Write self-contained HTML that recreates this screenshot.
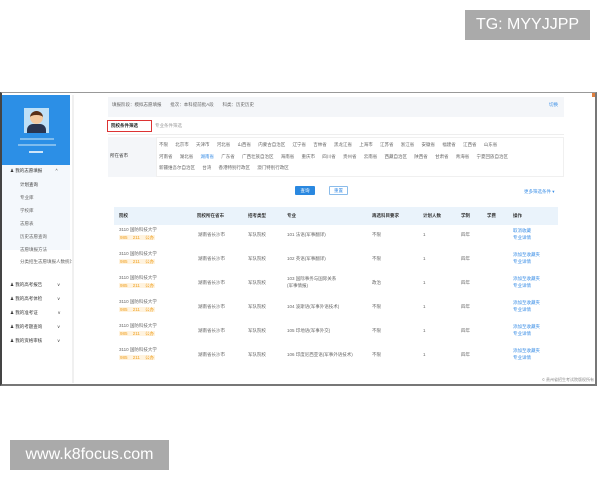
<!DOCTYPE html>
<html><head><meta charset="utf-8"><style>
*{margin:0;padding:0;box-sizing:border-box}
body{width:600px;height:480px;background:#fff;position:relative;overflow:hidden;font-family:"Liberation Sans","Noto Sans CJK SC",sans-serif;font-size:4.5px;color:#666}
.a{position:absolute;white-space:nowrap}
.frame{position:absolute;left:0;top:92px;width:597px;height:294px;border:2px solid #777;border-top:1.5px solid #999;border-left:2px solid #444;background:#fff}
.blue{color:#3a8ee6}
.org{color:#f0a020;background:#fff3df;padding:0 1px;word-spacing:4px}
</style></head><body>
<div class="a" style="left:465px;top:10px;width:125px;height:30px;background:#aaa;color:#fff;font-size:16px;line-height:30px;text-align:center">TG: MYYJJPP</div>
<div class="a" style="left:10px;top:440px;width:159px;height:30px;background:#aaa;color:#fff;font-size:16px;line-height:30px;text-align:center">www.k8focus.com</div>

<div class="frame">
 <div class="a" style="left:0;top:2px;width:68px;height:70px;background:#2c8fe6"></div>
 <div class="a" style="left:22px;top:15px;width:25px;height:25px;background:#bfe0f7"></div>
 <div class="a" style="left:28px;top:18px;width:13px;height:13px;border-radius:50%;background:#f3c9a0;border-top:4px solid #5a3018"></div>
 <div class="a" style="left:25px;top:31px;width:19px;height:9px;background:#2a3550;border-radius:6px 6px 0 0"></div>
 <div class="a" style="left:18px;top:45px;width:34px;height:2px;background:#7fbcee"></div>
 <div class="a" style="left:16px;top:51px;width:38px;height:2px;background:#7fbcee"></div>
 <div class="a" style="left:27px;top:58px;width:14px;height:2px;background:#cfe6f9"></div>
 <div class="a" style="left:0;top:72px;width:68px;height:85px;background:#f4f8fc"></div>
 <div class="a" style="left:8px;top:75px;color:#333">♟ 我的志愿填报 <span style="margin-left:12px">^</span></div>
 <div class="a" style="left:18px;top:89px;color:#333">计划查询</div>
 <div class="a" style="left:18px;top:102px">专业库</div>
 <div class="a" style="left:18px;top:115px">学校库</div>
 <div class="a" style="left:18px;top:128px">志愿表</div>
 <div class="a" style="left:18px;top:141px">历史志愿查询</div>
 <div class="a" style="left:18px;top:154px">志愿填报方法</div>
 <div class="a" style="left:18px;top:166px">分类招生志愿填报人数统计</div>
 <div class="a" style="left:8px;top:189px;color:#333">♟ 我的高考报告 <span style="margin-left:14px">v</span></div>
 <div class="a" style="left:8px;top:203px;color:#333">♟ 我的高考体检 <span style="margin-left:14px">v</span></div>
 <div class="a" style="left:8px;top:217px;color:#333">♟ 我的准考证 <span style="margin-left:19px">v</span></div>
 <div class="a" style="left:8px;top:231px;color:#333">♟ 我的考题查询 <span style="margin-left:14px">v</span></div>
 <div class="a" style="left:8px;top:245px;color:#333">♟ 我的资格审核 <span style="margin-left:14px">v</span></div>
 <div class="a" style="left:70px;top:2px;width:2px;height:288px;background:#f0f0f0"></div>

 <div class="a" style="left:106px;top:4px;width:456px;height:20px;background:#f4f6f9"></div>
 <div class="a" style="left:110px;top:9px">填报阶段：模拟志愿填报 &nbsp;&nbsp;&nbsp;&nbsp;&nbsp; 批次：本科提前批A段 &nbsp;&nbsp;&nbsp;&nbsp;&nbsp; 科类：历史历史</div>
 <div class="a blue" style="left:547px;top:9px">切换</div>
 <div class="a" style="left:105px;top:27px;width:45px;height:12px;border:1.5px solid #d33;color:#222;font-weight:bold;line-height:9px;padding-left:3px">院校条件筛选</div>
 <div class="a" style="left:153px;top:30px;color:#999">专业条件筛选</div>
 <div class="a" style="left:106px;top:41px;width:456px;height:1px;background:#eee"></div>
 <div class="a" style="left:106px;top:44px;width:48px;height:40px;background:#f4f6f9"></div>
 <div class="a" style="left:108px;top:60px;color:#333">所在省市</div>
 <div class="a" style="left:154px;top:44px;width:408px;height:40px;border:1px solid #f0f0f0"></div>
 <div class="a" style="left:157px;top:49px;word-spacing:6px">不限 北京市 天津市 河北省 山西省 内蒙古自治区 辽宁省 吉林省 黑龙江省 上海市 江苏省 浙江省 安徽省 福建省 江西省 山东省</div>
 <div class="a" style="left:157px;top:61px;word-spacing:6px">河南省 湖北省 <span class="blue">湖南省</span> 广东省 广西壮族自治区 海南省 重庆市 四川省 贵州省 云南省 西藏自治区 陕西省 甘肃省 青海省 宁夏回族自治区</div>
 <div class="a" style="left:157px;top:72px;word-spacing:6px">新疆维吾尔自治区 台湾 香港特别行政区 澳门特别行政区</div>

 <div class="a" style="left:293px;top:93px;width:20px;height:9px;background:#2a88e0;color:#fff;text-align:center;line-height:9px;border-radius:1px">查询</div>
 <div class="a blue" style="left:327px;top:93px;width:19px;height:9px;border:1px solid #8bbcea;text-align:center;line-height:7px;border-radius:1px">重置</div>
 <div class="a blue" style="left:522px;top:96px">更多筛选条件 ▾</div>

 <div class="a" style="left:112px;top:114px;width:444px;height:18px;background:#eaf3fb"></div>
 <div class="a" style="left:117px;top:120px;color:#333;font-weight:bold">院校</div>
 <div class="a" style="left:195px;top:120px;color:#333;font-weight:bold">院校所在省市</div>
 <div class="a" style="left:246px;top:120px;color:#333;font-weight:bold">招考类型</div>
 <div class="a" style="left:285px;top:120px;color:#333;font-weight:bold">专业</div>
 <div class="a" style="left:370px;top:120px;color:#333;font-weight:bold">再选科目要求</div>
 <div class="a" style="left:421px;top:120px;color:#333;font-weight:bold">计划人数</div>
 <div class="a" style="left:459px;top:120px;color:#333;font-weight:bold">学制</div>
 <div class="a" style="left:485px;top:120px;color:#333;font-weight:bold">学费</div>
 <div class="a" style="left:511px;top:120px;color:#333;font-weight:bold">操作</div>

 <div class="a" style="left:117px;top:134px">3110 国防科技大学<br><span class="org" style="line-height:10px">985 211 公办</span></div>
 <div class="a" style="left:196px;top:139px">湖南省长沙市</div><div class="a" style="left:246px;top:139px">军队院校</div><div class="a" style="left:285px;top:139px">101 法语(军事翻译)</div><div class="a" style="left:370px;top:139px">不限</div><div class="a" style="left:421px;top:139px">1</div><div class="a" style="left:459px;top:139px">四年</div><div class="a blue" style="left:511px;top:134px;line-height:7px">取消收藏<br>专业详情</div>

 <div class="a" style="left:117px;top:158px">3110 国防科技大学<br><span class="org" style="line-height:10px">985 211 公办</span></div>
 <div class="a" style="left:196px;top:163px">湖南省长沙市</div><div class="a" style="left:246px;top:163px">军队院校</div><div class="a" style="left:285px;top:163px">102 英语(军事翻译)</div><div class="a" style="left:370px;top:163px">不限</div><div class="a" style="left:421px;top:163px">1</div><div class="a" style="left:459px;top:163px">四年</div><div class="a blue" style="left:511px;top:158px;line-height:7px">添加至收藏夹<br>专业详情</div>

 <div class="a" style="left:117px;top:182px">3110 国防科技大学<br><span class="org" style="line-height:10px">985 211 公办</span></div>
 <div class="a" style="left:196px;top:187px">湖南省长沙市</div><div class="a" style="left:246px;top:187px">军队院校</div><div class="a" style="left:285px;top:182px;line-height:7px">103 国际事务与国际关系<br>(军事情报)</div><div class="a" style="left:370px;top:187px">政治</div><div class="a" style="left:421px;top:187px">1</div><div class="a" style="left:459px;top:187px">四年</div><div class="a blue" style="left:511px;top:182px;line-height:7px">添加至收藏夹<br>专业详情</div>

 <div class="a" style="left:117px;top:206px">3110 国防科技大学<br><span class="org" style="line-height:10px">985 211 公办</span></div>
 <div class="a" style="left:196px;top:211px">湖南省长沙市</div><div class="a" style="left:246px;top:211px">军队院校</div><div class="a" style="left:285px;top:211px">104 波斯语(军事外语技术)</div><div class="a" style="left:370px;top:211px">不限</div><div class="a" style="left:421px;top:211px">1</div><div class="a" style="left:459px;top:211px">四年</div><div class="a blue" style="left:511px;top:206px;line-height:7px">添加至收藏夹<br>专业详情</div>

 <div class="a" style="left:117px;top:230px">3110 国防科技大学<br><span class="org" style="line-height:10px">985 211 公办</span></div>
 <div class="a" style="left:196px;top:235px">湖南省长沙市</div><div class="a" style="left:246px;top:235px">军队院校</div><div class="a" style="left:285px;top:235px">105 印地语(军事外交)</div><div class="a" style="left:370px;top:235px">不限</div><div class="a" style="left:421px;top:235px">1</div><div class="a" style="left:459px;top:235px">四年</div><div class="a blue" style="left:511px;top:230px;line-height:7px">添加至收藏夹<br>专业详情</div>

 <div class="a" style="left:117px;top:254px">3110 国防科技大学<br><span class="org" style="line-height:10px">985 211 公办</span></div>
 <div class="a" style="left:196px;top:259px">湖南省长沙市</div><div class="a" style="left:246px;top:259px">军队院校</div><div class="a" style="left:285px;top:259px">106 印度尼西亚语(军事外语技术)</div><div class="a" style="left:370px;top:259px">不限</div><div class="a" style="left:421px;top:259px">1</div><div class="a" style="left:459px;top:259px">四年</div><div class="a blue" style="left:511px;top:254px;line-height:7px">添加至收藏夹<br>专业详情</div>

 <div class="a" style="left:540px;top:284px;font-size:4px;color:#888">© 贵州省招生考试院版权所有</div>
 <div class="a" style="left:590px;top:0;width:3px;height:4px;background:#e08040"></div>
</div>
</body></html>
